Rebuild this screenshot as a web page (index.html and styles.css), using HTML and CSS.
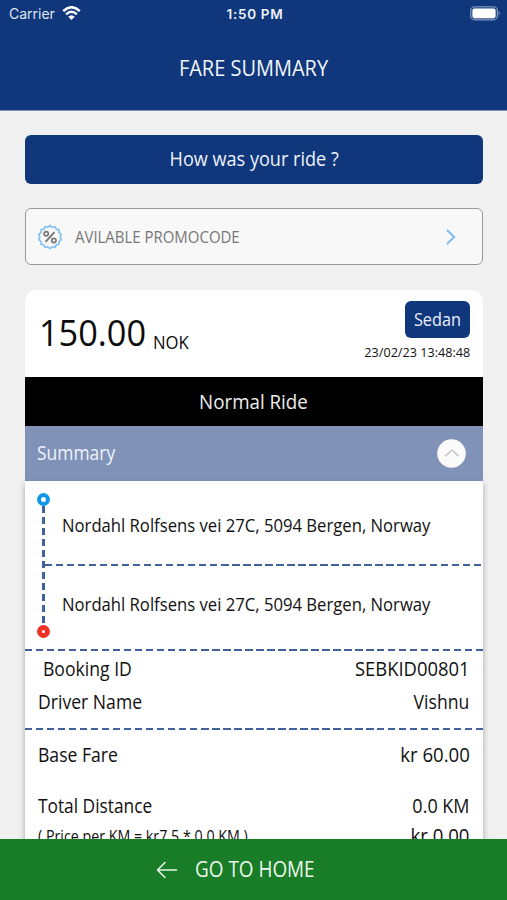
FILE: index.html
```html
<!DOCTYPE html>
<html lang="en">
<head>
<meta charset="utf-8">
<meta name="viewport" content="width=device-width, initial-scale=1">
<title>Fare Summary</title>
<link rel="stylesheet" href="styles.css">
</head>
<body>
<div class="screen">
  <header class="header">
    <div class="status">
      <div class="carrier"><span>Carrier</span>
        <svg width="19" height="15" viewBox="0 0 19 15" fill="none"><path d="M1.2 5.2Q9.5-2.7 17.8 5.2M4.1 8.3Q9.5 3.1 14.9 8.3" stroke="#fff" stroke-width="2.5"/><path d="M6.2 10.7Q9.5 7.7 12.8 10.7L9.5 14Z" fill="#fff"/></svg>
      </div>
      <div class="time">1:50 PM</div>
      <div class="power"><svg width="31" height="15" viewBox="0 0 31 15"><rect x=".7" y=".7" width="26.8" height="13.2" rx="4" fill="#2c4f8e" stroke="#8297bf" stroke-width="1.1"/><rect x="2.4" y="2.4" width="23.2" height="9.8" rx="2.3" fill="#fff"/><path d="M28.7 5Q31 7.3 28.7 9.6Z" fill="#8297bf"/></svg></div>
    </div>
    <h1 class="title">FARE SUMMARY</h1>
  </header>

  <main class="content">
    <button class="rate"><span>How was your ride ?</span></button>
    <div class="promo">
      <svg width="26" height="26" viewBox="0 0 26 26" fill="none"><path d="M13 1.500l2.200 1.800 2.800-.7 1.200 2.600 2.800.6v2.900l2.300 1.800L23.100 13l1.200 2.600-2.300 1.800v2.800l-2.800.7-1.200 2.600-2.800-.7L13 24.600l-2.200-1.800-2.800.7-1.200-2.600-2.800-.7v-2.800l-2.300-1.800L2.900 13l-1.200-2.500L4 8.700V5.800l2.800-.6L8 2.600l2.800.7Z" stroke="#86c1f2" stroke-width="1.700" stroke-linejoin="round"/><circle cx="9.200" cy="9.700" r="2.100" stroke="#777" stroke-width="1.700"/><circle cx="16.900" cy="16.500" r="2.100" stroke="#777" stroke-width="1.700"/><path d="M17 8.600L9 17.400" stroke="#777" stroke-width="1.900" stroke-linecap="round"/></svg>
      <span class="promo-label">AVILABLE PROMOCODE</span>
      <svg width="10" height="16" viewBox="0 0 10 16" fill="none"><path d="M1.500 1.500L8.200 8 1.500 14.500" stroke="#7fbdf0" stroke-width="2" stroke-linecap="round" stroke-linejoin="round"/></svg>
    </div>

    <section class="card">
      <div class="fare">
        <div class="price"><span class="amount">150.00</span><span class="currency">NOK</span></div>
        <div class="meta"><span class="vehicle"><span>Sedan</span></span><time class="date">23/02/23 13:48:48</time></div>
      </div>
      <div class="ride-type"><span>Normal Ride</span></div>
      <div class="summary">
        <span>Summary</span>
        <svg width="29" height="29" viewBox="0 0 29 29" fill="none"><circle cx="14.500" cy="14.500" r="14.300" fill="#fafafa"/><path d="M8.800 16.600L14.900 11 21 16.600" stroke="#c8c3c4" stroke-width="1.500" stroke-linecap="round" stroke-linejoin="round"/></svg>
      </div>
      <div class="details">
        <div class="route">
          <div class="track"><i class="dot from"></i><i class="line"></i><i class="dot to"></i></div>
          <div class="stops">
            <p class="stop">Nordahl Rolfsens vei 27C, 5094 Bergen, Norway</p>
            <div class="dash"></div>
            <p class="stop second">Nordahl Rolfsens vei 27C, 5094 Bergen, Norway</p>
          </div>
        </div>
        <div class="dash"></div>
        <div class="booking">
          <div class="row"><span class="w-id">Booking ID</span><span class="w-code">SEBKID00801</span></div>
          <div class="row"><span>Driver Name</span><span>Vishnu</span></div>
        </div>
        <div class="dash"></div>
        <div class="charges">
          <div class="row"><span>Base Fare</span><span class="w-money">kr 60.00</span></div>
          <div class="row distance"><span class="w-total">Total Distance</span><span class="w-km">0.0 KM</span></div>
          <div class="row rate-row"><span class="note">( Price per KM = kr7.5 * 0.0 KM )</span><span class="w-money">kr 0.00</span></div>
        </div>
      </div>
    </section>
  </main>

  <footer class="home">
    <svg width="22" height="18" viewBox="0 0 22 18" fill="none"><path d="M20.500 9H1.500M9 1.500L1.500 9 9 16.500" stroke="#e9f5e9" stroke-width="1.600" stroke-linecap="round" stroke-linejoin="round"/></svg>
    <span>GO TO HOME</span>
  </footer>
</div>
</body>
</html>
```
FILE: styles.css
```css
* { box-sizing: border-box; }
body { margin: 0; font-family: "Open Sans", sans-serif; color: #111; background: #f0f0f0; }
svg { display: block; flex: none; }
p, h1 { margin: 0; font-weight: 400; }

.screen { height: 900px; display: flex; flex-direction: column; overflow: hidden; }

.header { flex: none; height: 110px; background: #10377b; color: #fff; box-shadow: 0 1px 0 #7f93b8; }
.status { height: 27px; display: grid; grid-template-columns: 1fr auto 1fr; align-items: center; padding: 1px 6px 0 9px; font: 14px/26px "Inter", sans-serif; }
.carrier { display: flex; align-items: center; gap: 7px; color: #dfe6f2; }
.carrier svg { margin-top: -2px; }
.time { font-weight: 600; font-size: 13.500px; letter-spacing: .7px; color: #edf2fa; }
.power { justify-self: end; margin-top: -1px; }
.title { height: 80px; line-height: 80px; text-align: center; font-size: 22px; color: #f1f5fc; transform: scaleX(.908); }

.content { flex: 1; min-height: 0; overflow: hidden; padding: 25px 24.500px 0 25px; }
.rate { display: block; width: 100%; height: 49px; padding: 0 0 3px; border: 0; border-radius: 6px; background: #10377b; color: #edf2fb; font: 19.500px "Open Sans", sans-serif; }
.rate span { display: inline-block; transform: scaleX(.928); }
.promo { display: flex; align-items: center; height: 57px; margin-top: 24px; padding: 0 26px 0 11px; border: 1.500px solid #999; border-radius: 6px; background: #f8f8f8; }
.promo-label { flex: 1; margin-left: 11.500px; font-size: 17px; color: #777; transform: scaleX(.88); transform-origin: left; }

.card { margin-top: 25px; }
.fare { display: flex; justify-content: space-between; height: 87px; padding: 11px 12.500px 0 14px; border-radius: 12px 12px 0 0; background: #fff; }
.price { display: flex; align-items: baseline; height: 63px; line-height: 63px; color: #0c0c0c; }
.amount { font-size: 36.500px; transform: scaleX(.94); transform-origin: left; }
.currency { font-size: 19px; transform: translateY(3px) scaleX(.88); transform-origin: left; }
.meta { display: flex; flex-direction: column; align-items: flex-end; }
.vehicle { display: flex; justify-content: center; width: 65.500px; height: 37px; line-height: 36px; border-radius: 6px; background: #10377b; color: #e8effb; font-size: 19px; }
.vehicle span { transform: scaleX(.856); }
.date { margin-top: 4px; line-height: 20px; font-size: 13.500px; transform: scaleX(.935); transform-origin: right; }
.ride-type { height: 49px; line-height: 48px; background: #000; color: #ededed; text-align: center; font-size: 20.500px; }
.ride-type span { display: inline-block; transform: scaleX(.915); }
.summary { display: flex; align-items: center; justify-content: space-between; height: 55px; padding: 0 17px 0 12px; background: #8092b7; color: #edf3fd; font-size: 19.500px; }
.summary span { margin-top: -3px; transform: scaleX(.895); transform-origin: left; }

.details { background: #fff; box-shadow: 0 3px 6px rgba(0, 0, 0, .32); }
.dash { height: 2px; background: repeating-linear-gradient(90deg, #41609c 0 7.500px, transparent 7.500px 11px); }
.route { display: flex; height: 168px; }
.track { flex: none; width: 13px; margin: 12px 0 0 12px; display: flex; flex-direction: column; align-items: center; height: 145px; }
.dot { flex: none; width: 13px; height: 13px; border-radius: 50%; border: 4.200px solid #1196e8; background: #fff; }
.dot.to { border: 5px solid #ee3326; }
.line { flex: 1; width: 2.500px; background: repeating-linear-gradient(#41609c 0 7px, transparent 7px 11px); }
.stops { flex: 1; min-width: 0; padding-top: 5px; margin-left: -5px; }
.stop { height: 78px; line-height: 78px; margin-left: 16.500px; white-space: nowrap; font-size: 19px; transform: scaleX(.877); transform-origin: left; }
.stops .dash { margin-right: 1px; }
.stop.second { height: 76px; line-height: 76px; }

.row { display: flex; justify-content: space-between; line-height: 33px; padding: 0 13px 0 12.500px; font-size: 20px; white-space: nowrap; }
.row span { transform: scaleX(.88); transform-origin: right; }
.row span:first-child { transform-origin: left; }
.booking { height: 77px; padding-top: 1px; }
.row .w-id { margin-left: 5.500px; }
.row .w-code { transform: scaleX(.92); }
.charges { height: 180px; padding-top: 8px; }
.row .w-money { transform: scaleX(.93); }
.distance { margin-top: 18px; }
.row .w-total { transform: scaleX(.865); }
.row .w-km { transform: scaleX(.9); }
.rate-row { margin-top: -3px; }
.row .note { padding-top: 1px; font-size: 15.500px; transform: scaleX(.92); }

.home { flex: none; display: flex; align-items: center; gap: 16.500px; height: 61px; padding-left: 156px; background: #197d28; color: #edf7ee; font-size: 22px; }
.home span { margin-top: -3px; transform: scaleX(.86); transform-origin: left; }
```
